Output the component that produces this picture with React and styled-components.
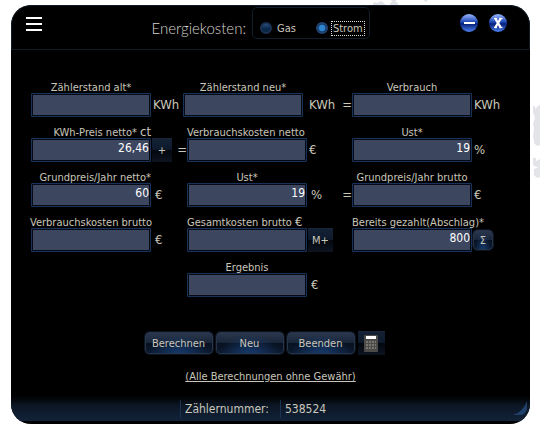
import React, { useState } from 'react';
import styled, { createGlobalStyle } from 'styled-components';

const GlobalStyle = createGlobalStyle`
  * {
    box-sizing: border-box;
  }
  body {
    margin: 0;
    background: #fff;
    font-family: "DejaVu Sans Condensed", "DejaVu Sans", sans-serif;
    font-size: 11px;
    color: #c9c6ba;
  }
  button, input {
    font-family: inherit;
    color: inherit;
    margin: 0;
  }
`

const Desktop = styled.div`
  position: relative;
  min-height: 100vh;
  padding: 5px 10px 0 11px;
  overflow: hidden;
`

const Splatter = styled.svg`
  position: absolute;
  top: 0;
  right: 0;
`

const Window = styled.main`
  position: relative;
  display: flex;
  flex-direction: column;
  background: #000;
  border-radius: 20px;
  overflow: hidden;
  padding-bottom: 3px;
`

const TitleBar = styled.header`
  display: flex;
  align-items: flex-start;
  height: 45px;
  border: 1px solid #101b28;
  border-radius: 20px 20px 0 0;
  padding: 0 22px 0 14px;
`

const MenuButton = styled.button`
  width: 16px;
  height: 14px;
  margin-top: 11px;
  padding: 0;
  border: 0;
  background: repeating-linear-gradient(#fff 0 2px, #000 2px 6px);
`

const Title = styled.h1`
  flex: 1;
  margin: 11px 6px 0 0;
  font: 300 15px/22px Lato, sans-serif;
  color: #d6d4cc;
  text-align: right;
`

const Choices = styled.fieldset`
  display: flex;
  align-items: center;
  gap: 18px;
  width: 118px;
  height: 32px;
  margin: 1px 90px 0 0;
  padding: 10px 0 0 7px;
  border: 1px solid #101d2c;
  border-radius: 5px;
`

const Choice = styled.label`
  display: flex;
  align-items: center;
  gap: 3px;
`

const Radio = styled.input`
  appearance: none;
  width: 12px;
  height: 12px;
  border: 2px solid #1b3152;
  border-radius: 50%;
  background: linear-gradient(#2a4b7e, #0a2746 60%);
  &:checked {
    border-color: #234373;
    background: radial-gradient(#2d83cd 0 3px, #0b2545 4px);
  }
`

const ChoiceText = styled.span`
  line-height: 13px;
  padding: 0 1px;
  border: 1px dotted ${params => params.$focused ? '#ddd' : 'transparent'};
`

const RoundButton = styled.button`
  display: flex;
  width: 18px;
  height: 18px;
  margin: 8px 0 0 ${params => params.$gap || 0}px;
  padding: 0;
  border: 0;
  border-radius: 50%;
  background: none;
`

const Form = styled.form`
  display: flex;
  flex-direction: column;
  align-items: center;
  padding-top: 31px;
`

const Row = styled.div`
  display: flex;
  align-items: flex-end;
  width: 479px;
  height: 36px;
  margin-bottom: 9px;
`

const Field = styled.div`
  display: flex;
  flex-direction: column;
  width: 120px;
`

const Caption = styled.div`
  display: flex;
  align-items: center;
  justify-content: ${params => params.$align || 'center'};
  gap: 3px;
  height: 12px;
  white-space: nowrap;
`

const Unit = styled.span`
  font-size: 13px;
  line-height: 16px;
`

const TextBox = styled.input`
  width: 100%;
  height: 24px;
  padding: 0 1px 4px;
  border: 1px solid #17335c;
  border-radius: 1px;
  background: #3c465e;
  box-shadow: inset 0 0 0 1px #050a14;
  color: #fff;
  font-size: 12px;
  text-align: right;
  outline: 0;
`

const Tail = styled.div`
  display: flex;
  align-items: center;
  justify-content: space-between;
  width: ${params => params.$width}px;
  height: 24px;
  padding-left: ${params => params.$indent ?? 2}px;
`

const SmallButton = styled.button`
  width: ${params => params.$width || 20}px;
  height: 24px;
  padding: 0;
  border: 0;
  border-top: 1px solid #18253a;
  background: linear-gradient(#142034, #0e1a2c 45%, #03070e 50%, #0d1421);
  font-size: 11px;
  text-align: center;
`

const GlossButton = styled.button`
  width: ${params => params.$width || 68}px;
  height: ${params => params.$height || 22}px;
  padding: 0;
  border: 1px solid #26344a;
  border-radius: 4px;
  outline: 1px solid #0c131f;
  background: radial-gradient(ellipse at 50% 110%, #173c70, transparent 65%),
    linear-gradient(#2a374c, #19263a 48%, #08111f 52%, #0c1a30);
  font-size: 11px;
`

const Actions = styled.div`
  display: flex;
  align-items: center;
  gap: 3px;
  margin: 25px 12px 0 0;
`

const CalcButton = styled(SmallButton)`
  display: flex;
  align-items: center;
  justify-content: center;
`

const Note = styled.a`
  margin: 14px 0 11px;
  color: inherit;
  line-height: 16px;
`

const StatusBar = styled.footer`
  display: flex;
  align-items: center;
  height: 25px;
  background: linear-gradient(#000, #0c1726 40%, #122238);
  font-size: 12px;
`

const StatusCell = styled.span`
  width: ${params => params.$width}px;
  height: 18px;
  line-height: 18px;
  padding-left: 4px;
  border-right: 1px solid #1b3350;
  &:last-of-type {
    border: 0;
  }
`

const Grip = styled.svg`
  margin: 0 3px 0 auto;
`

const Cell = ({ id, label, align, extra, value = '' }) => (
  <Field>
    <Caption $align={align}>
      <label htmlFor={id}>{label}</label>
      {extra && <Unit>{extra}</Unit>}
    </Caption>
    <TextBox id={id} defaultValue={value} />
  </Field>
);

const App = () => {
  const [kind, setKind] = useState('Strom');
  return (
    <Desktop>
      <GlobalStyle />
      <Splatter width="170" height="200" fill="#e2e4e7" aria-hidden="true">
        <path d="M3 3l3-1 1 1 4-2 3 2 2 2H3zM21 0h5v2l2 1v2h-8V3l2-1zM53 0h5l-2 2z" />
        <path d="M163 106h2v3l3-3 2-1v40l-3 1-3-3v-3l-1-3 1-9-1-4 2-6-2-6zM163 158h3v3l4-2v8h-4l-3-2zM164 169l3-1 3-3v12l-3 1-3-3z" />
      </Splatter>
      <Window>
        <TitleBar>
          <MenuButton type="button" aria-label="Menü" />
          <Title>Energiekosten:</Title>
          <Choices>
            {['Gas', 'Strom'].map(name => (
              <Choice key={name}>
                <Radio
                  type="radio"
                  name="kind"
                  checked={kind === name}
                  onChange={() => setKind(name)}
                />
                <ChoiceText $focused={kind === name}>{name}</ChoiceText>
              </Choice>
            ))}
          </Choices>
          <RoundButton type="button" aria-label="Minimieren">
            <svg width="18" height="18">
              <defs>
                <linearGradient id="ball" x2="0" y2="1">
                  <stop offset="0" stopColor="#9bb8ff" />
                  <stop offset=".45" stopColor="#1d46b4" />
                  <stop offset=".55" stopColor="#061f78" />
                  <stop offset="1" stopColor="#4c82f0" />
                </linearGradient>
              </defs>
              <circle cx="9" cy="9" r="9" fill="url(#ball)" />
              <path d="M4 9h11" stroke="#fff" strokeWidth="2" />
            </svg>
          </RoundButton>
          <RoundButton type="button" aria-label="Schließen" $gap={11}>
            <svg width="18" height="18">
              <circle cx="9" cy="9" r="9" fill="url(#ball)" />
              <path d="M6 4l6 10M12 4L6 14" stroke="#fff" strokeWidth="2.4" />
              <path d="M5 4.5h3M10.500 4.500h3M5 13.500h3M10.500 13.500h3" stroke="#fff" />
            </svg>
          </RoundButton>
        </TitleBar>
        <Form onSubmit={e => e.preventDefault()}>
          <Row>
            <Cell id="alt" label="Zählerstand alt*" />
            <Tail $width={32}><Unit>KWh</Unit></Tail>
            <Cell id="neu" label="Zählerstand neu*" />
            <Tail $width={49} $indent={6}><Unit>KWh</Unit><Unit>=</Unit></Tail>
            <Cell id="verbrauch" label="Verbrauch" />
            <Tail $width={38}><Unit>KWh</Unit></Tail>
          </Row>
          <Row>
            <Cell id="preis" label="KWh-Preis netto*" align="flex-end" extra="ct" value="26,46" />
            <Tail $width={36} $indent={1}><SmallButton type="button">+</SmallButton><Unit>=</Unit></Tail>
            <Cell id="vknetto" label="Verbrauchskosten netto" align="flex-start" />
            <Tail $width={45}><Unit>€</Unit></Tail>
            <Cell id="ust1" label="Ust*" value="19" />
            <Tail $width={38}><Unit>%</Unit></Tail>
          </Row>
          <Row>
            <Cell id="gpnetto" label="Grundpreis/Jahr netto*" align="flex-end" value="60" />
            <Tail $width={36} $indent={4}><Unit>€</Unit></Tail>
            <Cell id="ust2" label="Ust*" value="19" />
            <Tail $width={45} $indent={4}><Unit>%</Unit><Unit>=</Unit></Tail>
            <Cell id="gpbrutto" label="Grundpreis/Jahr brutto" />
            <Tail $width={38}><Unit>€</Unit></Tail>
          </Row>
          <Row>
            <Cell id="vkbrutto" label="Verbrauchskosten brutto" />
            <Tail $width={36} $indent={4}><Unit>€</Unit></Tail>
            <Cell id="gkbrutto" label="Gesamtkosten brutto" align="flex-start" extra="€" />
            <Tail $width={45} $indent={1}><SmallButton type="button" $width={25}>M+</SmallButton></Tail>
            <Cell id="abschlag" label="Bereits gezahlt(Abschlag)*" align="flex-start" value="800" />
            <Tail $width={38} $indent={1}><GlossButton type="button" $width={20} $height={20}>Σ</GlossButton></Tail>
          </Row>
          <Row>
            <Tail $width={156} />
            <Cell id="ergebnis" label="Ergebnis" />
            <Tail $width={45} $indent={4}><Unit>€</Unit></Tail>
          </Row>
          <Actions>
            <GlossButton type="submit">Berechnen</GlossButton>
            <GlossButton type="reset">Neu</GlossButton>
            <GlossButton type="button">Beenden</GlossButton>
            <CalcButton type="button" $width={27} aria-label="Rechner">
              <svg width="14" height="17">
                <rect width="14" height="17" rx="1" fill="#4b4a48" />
                <path d="M2 1h10v3H2z" fill="#fff" />
                <path d="M2 7h10M2 10h10M2 13h10" stroke="#77756f" strokeWidth="2" strokeDasharray="2 1" />
              </svg>
            </CalcButton>
          </Actions>
          <Note href="#">(Alle Berechnungen ohne Gewähr)</Note>
        </Form>
        <StatusBar>
          <StatusCell $width={170} />
          <StatusCell $width={100}>Zählernummer:</StatusCell>
          <StatusCell $width={100}>538524</StatusCell>
          <Grip width="14" height="16">
            <path d="M14 0v8q-2 5-5 6H0Q10 11 14 0z" fill="#20406c" />
          </Grip>
        </StatusBar>
      </Window>
    </Desktop>
  );
};

export default App;
